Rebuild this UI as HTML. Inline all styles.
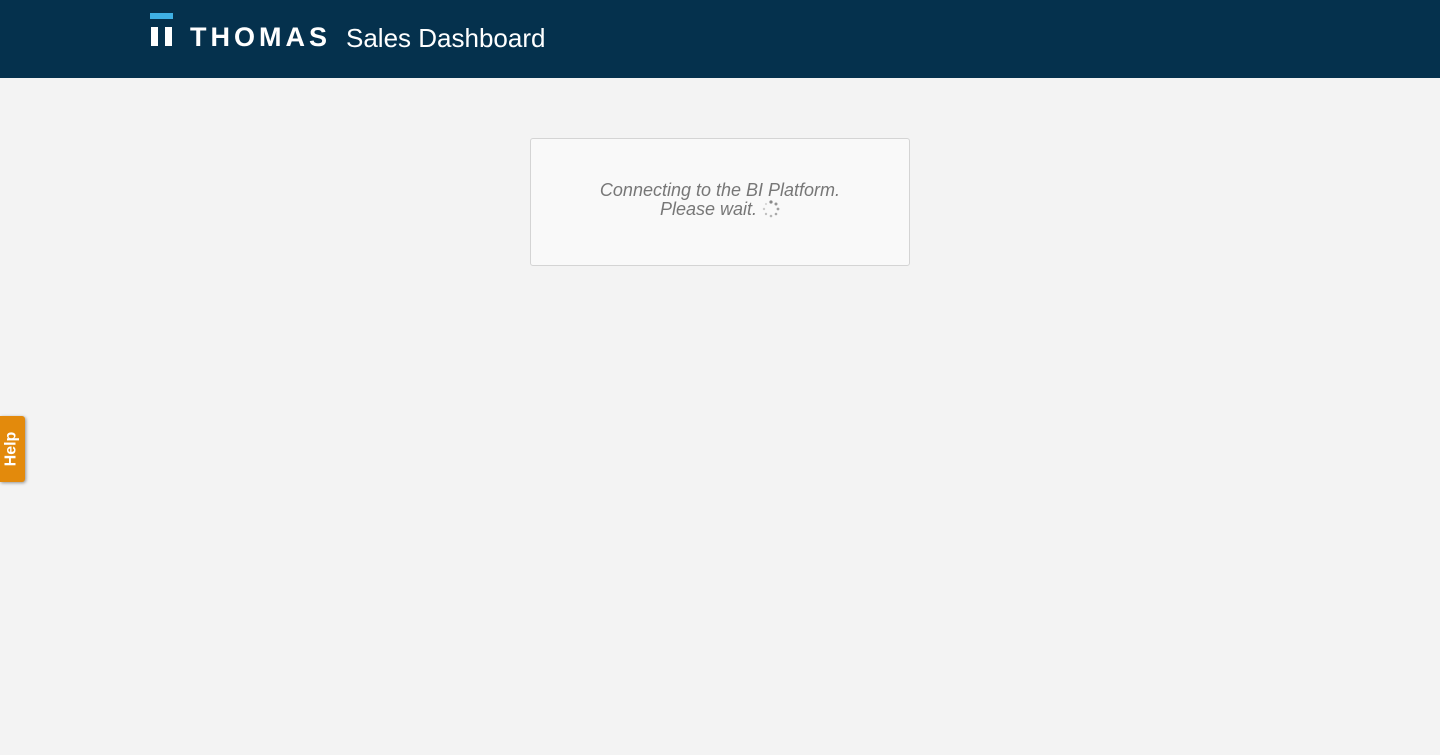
<!DOCTYPE html>
<html><head><style>
body{margin:0;width:1440px;height:755px;background:#f3f3f3;font-family:"Liberation Sans",sans-serif;position:relative;overflow:hidden}
.hdr{position:absolute;left:0;top:0;width:1440px;height:78px;background:#05314d}
.bar{position:absolute;background:#fff}
.box{position:absolute;left:530px;top:138px;width:378px;height:126px;border:1px solid #d4d4d4;border-radius:3px;background:#f9f9f9;text-align:center;font-style:italic;color:#777;font-size:18px;line-height:19px}
.help{position:absolute;left:0;top:416px;width:25px;height:66px;background:#e38a0c;border-radius:0 3px 3px 0;box-shadow:1px 1px 3px rgba(0,0,0,.4)}
.help span{position:absolute;left:-6px;top:24px;transform:rotate(-90deg);color:#fff;font-weight:bold;font-size:16px}
</style></head><body>
<div class="hdr">
<div class="bar" style="left:150px;top:13px;width:23px;height:6px;background:#3fb0e4"></div>
<div class="bar" style="left:151px;top:27px;width:7px;height:19px"></div>
<div class="bar" style="left:165px;top:27px;width:7px;height:19px"></div>
<div style="position:absolute;left:190px;top:22px;color:#fff;font-weight:bold;font-size:27px;letter-spacing:4px">THOMAS</div>
<div style="position:absolute;left:346px;top:23px;color:#fff;font-size:26px">Sales Dashboard</div>
</div>
<div class="box"><div style="margin-top:42px">Connecting to the BI Platform.<br>Please wait. <svg width="18" height="18" viewBox="0 0 18 18" style="vertical-align:-3px"><g fill="#888"><circle cx="9" cy="2" r="1.6"/><circle cx="14" cy="4" r="1.5" opacity=".9"/><circle cx="16" cy="9" r="1.4" opacity=".8"/><circle cx="14" cy="14" r="1.3" opacity=".7"/><circle cx="9" cy="16" r="1.3" opacity=".6"/><circle cx="4" cy="14" r="1.2" opacity=".5"/><circle cx="2" cy="9" r="1.2" opacity=".4"/><circle cx="4" cy="4" r="1.1" opacity=".3"/></g></svg></div></div>
<div class="help"><span>Help</span></div>
</body></html>
